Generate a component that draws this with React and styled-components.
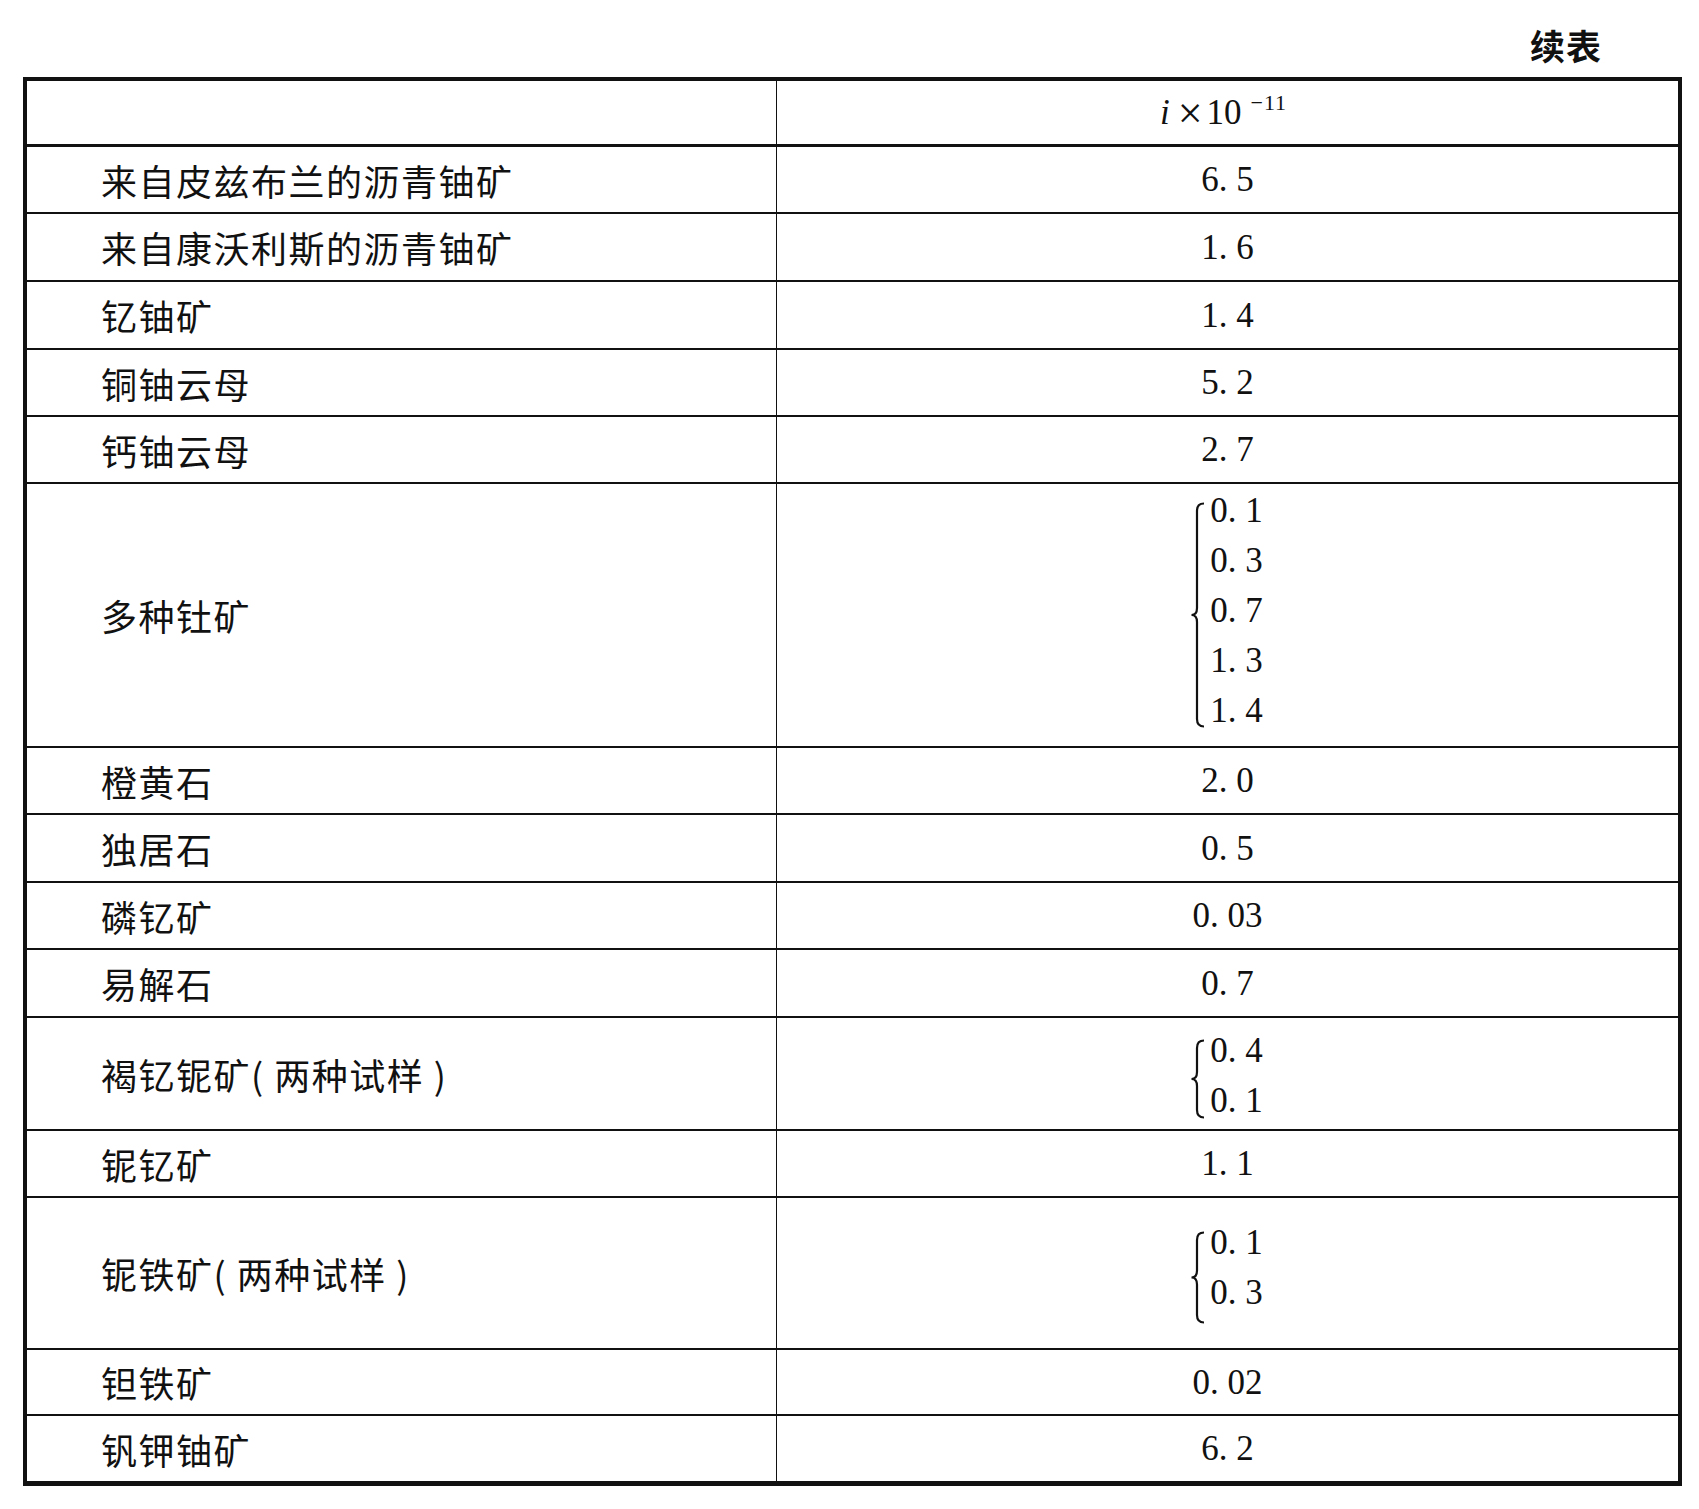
import React from "react";
import styled, { createGlobalStyle } from "styled-components";

const GlobalStyle = createGlobalStyle`
  html, body {
    margin: 0;
    padding: 0;
    background: #ffffff;
  }
  body {
    font-family: "Noto Sans CJK SC", "Liberation Serif", serif;
    color: #111;
  }
`;

const rows = [
  { name: "来自皮兹布兰的沥青铀矿", h: 67, values: ["6. 5"] },
  { name: "来自康沃利斯的沥青铀矿", h: 68, values: ["1. 6"] },
  { name: "钇铀矿", h: 68, values: ["1. 4"] },
  { name: "铜铀云母", h: 67, values: ["5. 2"] },
  { name: "钙铀云母", h: 67, values: ["2. 7"] },
  {
    name: "多种钍矿",
    h: 264,
    values: ["0. 1", "0. 3", "0. 7", "1. 3", "1. 4"],
    lh: 50,
    brace: { top: 16, height: 226, shift: -4 },
  },
  { name: "橙黄石", h: 67, values: ["2. 0"] },
  { name: "独居石", h: 68, values: ["0. 5"] },
  { name: "磷钇矿", h: 67, values: ["0. 03"] },
  { name: "易解石", h: 68, values: ["0. 7"] },
  {
    name: "褐钇铌矿( 两种试样 )",
    h: 113,
    values: ["0. 4", "0. 1"],
    lh: 50,
    brace: { top: 13, height: 80, shift: 2 },
  },
  { name: "铌钇矿", h: 67, values: ["1. 1"] },
  {
    name: "铌铁矿( 两种试样 )",
    h: 152,
    values: ["0. 1", "0. 3"],
    lh: 50,
    brace: { top: 13, height: 93, shift: -2 },
  },
  { name: "钽铁矿", h: 66, values: ["0. 02"] },
  { name: "钒钾铀矿", h: 65, values: ["6. 2"], last: true },
];

const Page = styled.div`
  width: 1699px;
  padding: 0 0 0 23px;
  box-sizing: border-box;
`;

const TitleBar = styled.div`
  width: 1659px;
  height: 77px;
  box-sizing: border-box;
  display: flex;
  justify-content: flex-end;
  align-items: flex-start;
  padding: 27px 80px 0 0;
`;

const Title = styled.div`
  font-family: "Noto Sans CJK SC", sans-serif;
  font-size: 35px;
  font-weight: 700;
  line-height: 1;
  letter-spacing: 1px;
  color: #111;
`;

const Table = styled.div`
  width: 1659px;
  box-sizing: border-box;
  border: 4px solid #111;
  border-bottom-width: 5px;
`;

const Row = styled.div`
  display: grid;
  grid-template-columns: 750px 1fr;
  height: ${(p) => p.$h}px;
  box-sizing: border-box;
  border-bottom: ${(p) => (p.$last ? "none" : `${p.$line}px solid #111`)};
`;

const NameCell = styled.div`
  display: flex;
  align-items: center;
  padding-left: 74px;
  border-right: 1px solid #111;
  font-family: "Noto Sans CJK SC", sans-serif;
  font-size: 36px;
  letter-spacing: 1.5px;
  line-height: 1;
  color: #111;
  white-space: pre;
`;

const ValueCell = styled.div`
  display: flex;
  align-items: center;
  justify-content: center;
  font-family: "Liberation Serif", serif;
  font-size: 35px;
  line-height: 1;
  color: #111;
  white-space: pre;
`;

const HeaderValue = styled.span`
  font-family: "Liberation Serif", serif;
  font-size: 35px;
  line-height: 1;
  white-space: pre;
  padding-top: 2px;
  margin-left: -8px;
`;

const Italic = styled.i`
  font-style: italic;
`;

const Times = styled.span`
  display: inline-block;
  font-size: 44px;
  line-height: 1;
  vertical-align: -4px;
  margin: 0 4px 0 8px;
`;

const Sup = styled.span`
  display: inline-block;
  font-size: 22px;
  vertical-align: 14px;
  margin-left: 9px;
  letter-spacing: 1px;
`;

const Stack = styled.div`
  display: flex;
  align-items: flex-start;
  gap: 6px;
  margin-top: ${(p) => p.$shift * 2}px;
  margin-left: -2px;
`;

const BraceSvg = styled.svg`
  flex: none;
  margin-top: ${(p) => p.$top}px;
`;

const Lines = styled.div`
  display: flex;
  flex-direction: column;
  line-height: ${(p) => p.$lh}px;
`;

const Brace = ({ height, top }) => {
  const w = 14;
  const m = height / 2;
  const x = 7;
  const d = `M ${w} 1.5 Q ${x} 1.5 ${x} 9 L ${x} ${m - 7} Q ${x} ${m} 1.5 ${m} Q ${x} ${m} ${x} ${m + 7} L ${x} ${height - 9} Q ${x} ${height - 1.5} ${w} ${height - 1.5}`;
  return (
    <BraceSvg width={w} height={height} viewBox={`0 0 ${w} ${height}`} $top={top}>
      <path d={d} fill="none" stroke="#111" strokeWidth="2.2" />
    </BraceSvg>
  );
};

const Values = ({ row }) => {
  if (row.values.length === 1) return <span>{row.values[0]}</span>;
  return (
    <Stack $shift={row.brace.shift}>
      <Brace height={row.brace.height} top={row.brace.top} />
      <Lines $lh={row.lh}>
        {row.values.map((v, i) => (
          <span key={i}>{v}</span>
        ))}
      </Lines>
    </Stack>
  );
};

export default function App() {
  return (
    <>
      <GlobalStyle />
      <Page>
        <TitleBar>
          <Title>续表</Title>
        </TitleBar>
        <Table>
          <Row $h={66} $line={3}>
            <NameCell />
            <ValueCell>
              <HeaderValue>
                <Italic>i</Italic>
                <Times>×</Times>10<Sup>−11</Sup>
              </HeaderValue>
            </ValueCell>
          </Row>
          {rows.map((row) => (
            <Row key={row.name} $h={row.h} $line={2} $last={row.last}>
              <NameCell>{row.name}</NameCell>
              <ValueCell>
                <Values row={row} />
              </ValueCell>
            </Row>
          ))}
        </Table>
      </Page>
    </>
  );
}
